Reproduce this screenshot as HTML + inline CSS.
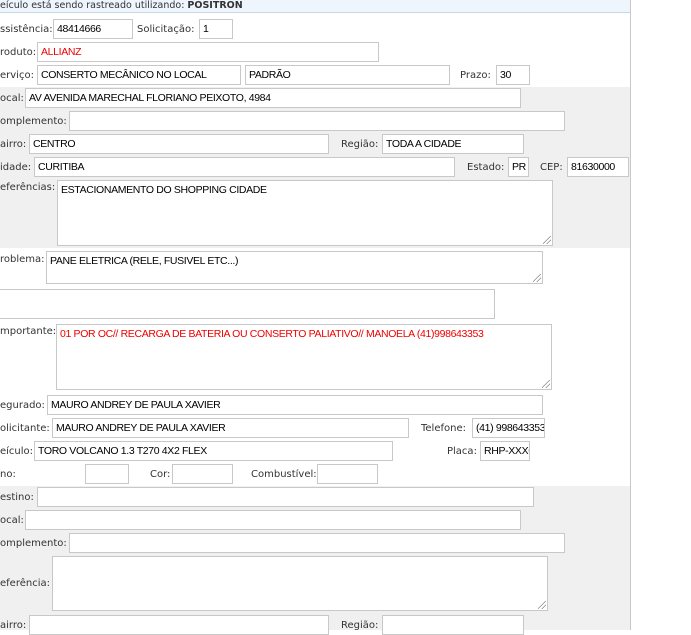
<!DOCTYPE html>
<html><head><meta charset="utf-8"><style>
body{margin:0;width:691px;height:630px;overflow:hidden;background:#fff;position:relative;font-family:"DejaVu Sans",Verdana,sans-serif;font-size:10px;color:#333}
.p{position:absolute}
.hdr{left:0;top:0;width:630px;height:12px;background:#eef5fc;border-bottom:1px solid #c9d6e3;font-size:9.5px;line-height:11px;color:#333}
.g{position:absolute;left:0;width:630px;background:#f0f0f0}
.vb{position:absolute;left:630px;top:0;width:1px;height:630px;background:#c8c8c8}
.l{position:absolute;white-space:nowrap;line-height:12px;color:#333;margin-top:1px}
.i{position:absolute;box-sizing:border-box;height:20px;border:1px solid #c8c8c8;background:#fff;font-family:"Liberation Sans",Arial,sans-serif;font-size:10.5px;letter-spacing:-0.35px;line-height:19px;padding-left:3px;white-space:nowrap;overflow:hidden;color:#000}
.t{line-height:14px;padding-top:2px}
.r{color:#e00}
.rz{position:absolute;right:1px;bottom:1px;width:8px;height:8px;background:linear-gradient(135deg,transparent 45%,#888 45%,#888 52%,transparent 52%,transparent 70%,#888 70%,#888 77%,transparent 77%)}
</style></head><body>
<div class="g" style="top:87px;height:161px"></div>
<div class="g" style="top:486px;height:144px"></div>
<div class="vb"></div>
<div class="p hdr">eículo está sendo rastreado utilizando: <b>POSITRON</b></div>

<div class="l" style="left:0;top:23px">ssistência:</div>
<div class="i" style="left:53px;top:19px;width:80px">48414666</div>
<div class="l" style="left:137px;top:23px">Solicitação:</div>
<div class="i" style="left:199px;top:19px;width:34px">1</div>

<div class="l" style="left:0;top:46px">roduto:</div>
<div class="i r" style="left:37px;top:42px;width:342px">ALLIANZ</div>

<div class="l" style="left:0;top:69px">erviço:</div>
<div class="i" style="left:37px;top:65px;width:204px">CONSERTO MECÂNICO NO LOCAL</div>
<div class="i" style="left:245px;top:65px;width:205px">PADRÃO</div>
<div class="l" style="left:460px;top:69px">Prazo:</div>
<div class="i" style="left:496px;top:65px;width:34px">30</div>

<div class="l" style="left:0;top:92px">ocal:</div>
<div class="i" style="left:25px;top:88px;width:496px">AV AVENIDA MARECHAL FLORIANO PEIXOTO, 4984</div>
<div class="l" style="left:0;top:115px">omplemento:</div>
<div class="i" style="left:69px;top:111px;width:496px"></div>
<div class="l" style="left:0;top:138px">airro:</div>
<div class="i" style="left:29px;top:134px;width:300px">CENTRO</div>
<div class="l" style="left:341px;top:138px">Região:</div>
<div class="i" style="left:382px;top:134px;width:142px">TODA A CIDADE</div>
<div class="l" style="left:0;top:161px">idade:</div>
<div class="i" style="left:34px;top:157px;width:421px">CURITIBA</div>
<div class="l" style="left:467px;top:161px">Estado:</div>
<div class="i" style="left:508px;top:157px;width:21px">PR</div>
<div class="l" style="left:540px;top:161px">CEP:</div>
<div class="i" style="left:567px;top:157px;width:62px">81630000</div>
<div class="l" style="left:0;top:181px">eferências:</div>
<div class="i t" style="left:57px;top:180px;width:496px;height:66px">ESTACIONAMENTO DO SHOPPING CIDADE<div class="rz"></div></div>

<div class="l" style="left:0;top:253px">roblema:</div>
<div class="i t" style="left:46px;top:251px;width:497px;height:33px">PANE ELETRICA (RELE, FUSIVEL ETC...)<div class="rz"></div></div>
<div class="i" style="left:-5px;top:289px;width:500px;height:30px"></div>
<div class="l" style="left:0;top:325px">mportante:</div>
<div class="i t r" style="left:56px;top:324px;width:496px;height:66px">01 POR OC// RECARGA DE BATERIA OU CONSERTO PALIATIVO// MANOELA (41)998643353<div class="rz"></div></div>

<div class="l" style="left:0;top:399px">egurado:</div>
<div class="i" style="left:47px;top:395px;width:496px">MAURO ANDREY DE PAULA XAVIER</div>
<div class="l" style="left:0;top:422px">olicitante:</div>
<div class="i" style="left:52px;top:418px;width:357px">MAURO ANDREY DE PAULA XAVIER</div>
<div class="l" style="left:421px;top:422px">Telefone:</div>
<div class="i" style="left:472px;top:418px;width:73px">(41) 998643353</div>
<div class="l" style="left:0;top:445px">eículo:</div>
<div class="i" style="left:34px;top:441px;width:359px">TORO VOLCANO 1.3 T270 4X2 FLEX</div>
<div class="l" style="left:447px;top:445px">Placa:</div>
<div class="i" style="left:480px;top:441px;width:50px">RHP-XXXO</div>
<div class="l" style="left:0;top:468px">no:</div>
<div class="i" style="left:85px;top:464px;width:44px"></div>
<div class="l" style="left:150px;top:468px">Cor:</div>
<div class="i" style="left:172px;top:464px;width:61px"></div>
<div class="l" style="left:251px;top:468px">Combustível:</div>
<div class="i" style="left:317px;top:464px;width:61px"></div>

<div class="l" style="left:0;top:491px">estino:</div>
<div class="i" style="left:37px;top:487px;width:497px"></div>
<div class="l" style="left:0;top:514px">ocal:</div>
<div class="i" style="left:25px;top:510px;width:496px"></div>
<div class="l" style="left:0;top:537px">omplemento:</div>
<div class="i" style="left:69px;top:533px;width:496px"></div>
<div class="l" style="left:0;top:577px">eferência:</div>
<div class="i" style="left:52px;top:556px;width:496px;height:55px"><div class="rz"></div></div>
<div class="l" style="left:0;top:619px">airro:</div>
<div class="i" style="left:29px;top:615px;width:300px"></div>
<div class="l" style="left:341px;top:619px">Região:</div>
<div class="i" style="left:382px;top:615px;width:142px"></div>
</body></html>
